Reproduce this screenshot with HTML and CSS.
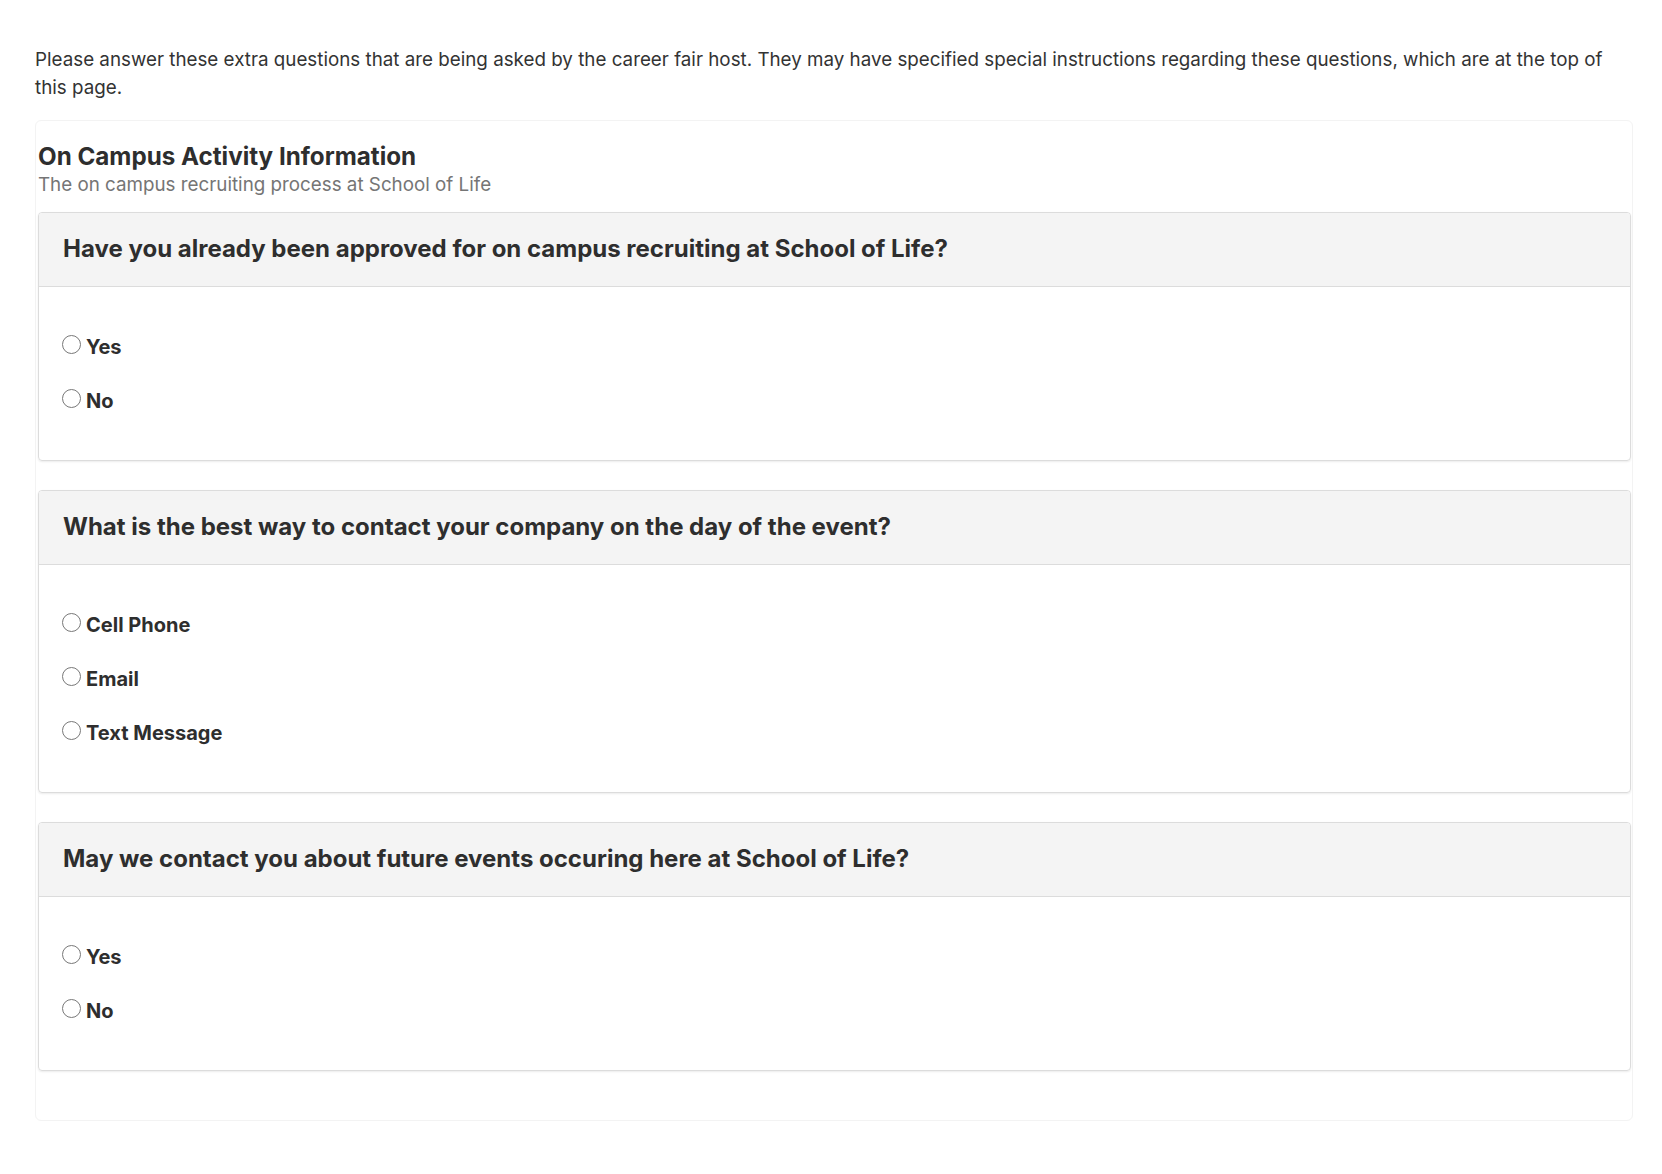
FILE: index.html
```html
<!DOCTYPE html>
<html lang="en">
<head>
    <meta charset="UTF-8">
    <meta name="viewport" content="width=device-width, initial-scale=1.0">
    <title>Career Fair Questions</title>
    <link rel="stylesheet" href="styles.css">
</head>
<body>
    <div class="page">
        <p class="intro">Please answer these extra questions that are being asked by the career fair host. They may have specified special instructions regarding these questions, which are at the top of this page.</p>

        <section class="question-group">
            <h2>On Campus Activity Information</h2>
            <p class="group-subtitle">The on campus recruiting process at School of Life</p>

            <div class="question-card">
                <div class="question-header">
                    <h3>Have you already been approved for on campus recruiting at School of Life?</h3>
                </div>
                <div class="question-body">
                    <label class="option"><input type="radio" name="q1"> Yes</label>
                    <label class="option"><input type="radio" name="q1"> No</label>
                </div>
            </div>

            <div class="question-card">
                <div class="question-header">
                    <h3>What is the best way to contact your company on the day of the event?</h3>
                </div>
                <div class="question-body">
                    <label class="option"><input type="radio" name="q2"> Cell Phone</label>
                    <label class="option"><input type="radio" name="q2"> Email</label>
                    <label class="option"><input type="radio" name="q2"> Text Message</label>
                </div>
            </div>

            <div class="question-card">
                <div class="question-header">
                    <h3>May we contact you about future events occuring here at School of Life?</h3>
                </div>
                <div class="question-body">
                    <label class="option"><input type="radio" name="q3"> Yes</label>
                    <label class="option"><input type="radio" name="q3"> No</label>
                </div>
            </div>
        </section>
    </div>
</body>
</html>
```

FILE: styles.css
```css
* {
    margin: 0;
    padding: 0;
    box-sizing: border-box;
}

body {
    font-family: Inter, "Noto Sans", sans-serif;
    background-color: #fff;
    color: #333;
}

.page {
    padding: 46px 29px 40px 35px;
}

.intro {
    font-size: 18.8px;
    line-height: 28px;
    color: #333;
    margin-bottom: 18px;
}

.question-group {
    border: 1px solid #f3f3f3;
    border-radius: 6px;
    padding: 22px 1px 49px 2px;
}

.question-group h2 {
    font-size: 24.2px;
    line-height: 28px;
    font-weight: 700;
    color: #2e2e2e;
}

.group-subtitle {
    font-size: 18.8px;
    line-height: 24px;
    color: #757575;
    margin-top: 2px;
    margin-bottom: 15px;
}

.question-card {
    border: 1px solid #dcdcdc;
    border-radius: 4px;
    box-shadow: 0 1px 2px rgba(0, 0, 0, 0.08);
    margin-bottom: 29px;
    overflow: hidden;
}

.question-card:last-child {
    margin-bottom: 0;
}

.question-header {
    background-color: #f4f4f4;
    border-bottom: 1px solid #dcdcdc;
    padding: 21px 24px 22px;
}

.question-header h3 {
    font-size: 24px;
    line-height: 30px;
    font-weight: 700;
    color: #2e2e2e;
}

.question-body {
    display: flex;
    flex-direction: column;
    gap: 24px;
    padding: 45px 23px 44px;
}

.option {
    display: flex;
    align-items: flex-start;
    gap: 5px;
    font-size: 20px;
    line-height: 30px;
    font-weight: 700;
    color: #2e2e2e;
}

.option input {
    appearance: none;
    -webkit-appearance: none;
    width: 19px;
    height: 19px;
    margin-top: 3px;
    border: 1.5px solid #787878;
    border-radius: 50%;
    background: #fff;
    flex-shrink: 0;
}
```
